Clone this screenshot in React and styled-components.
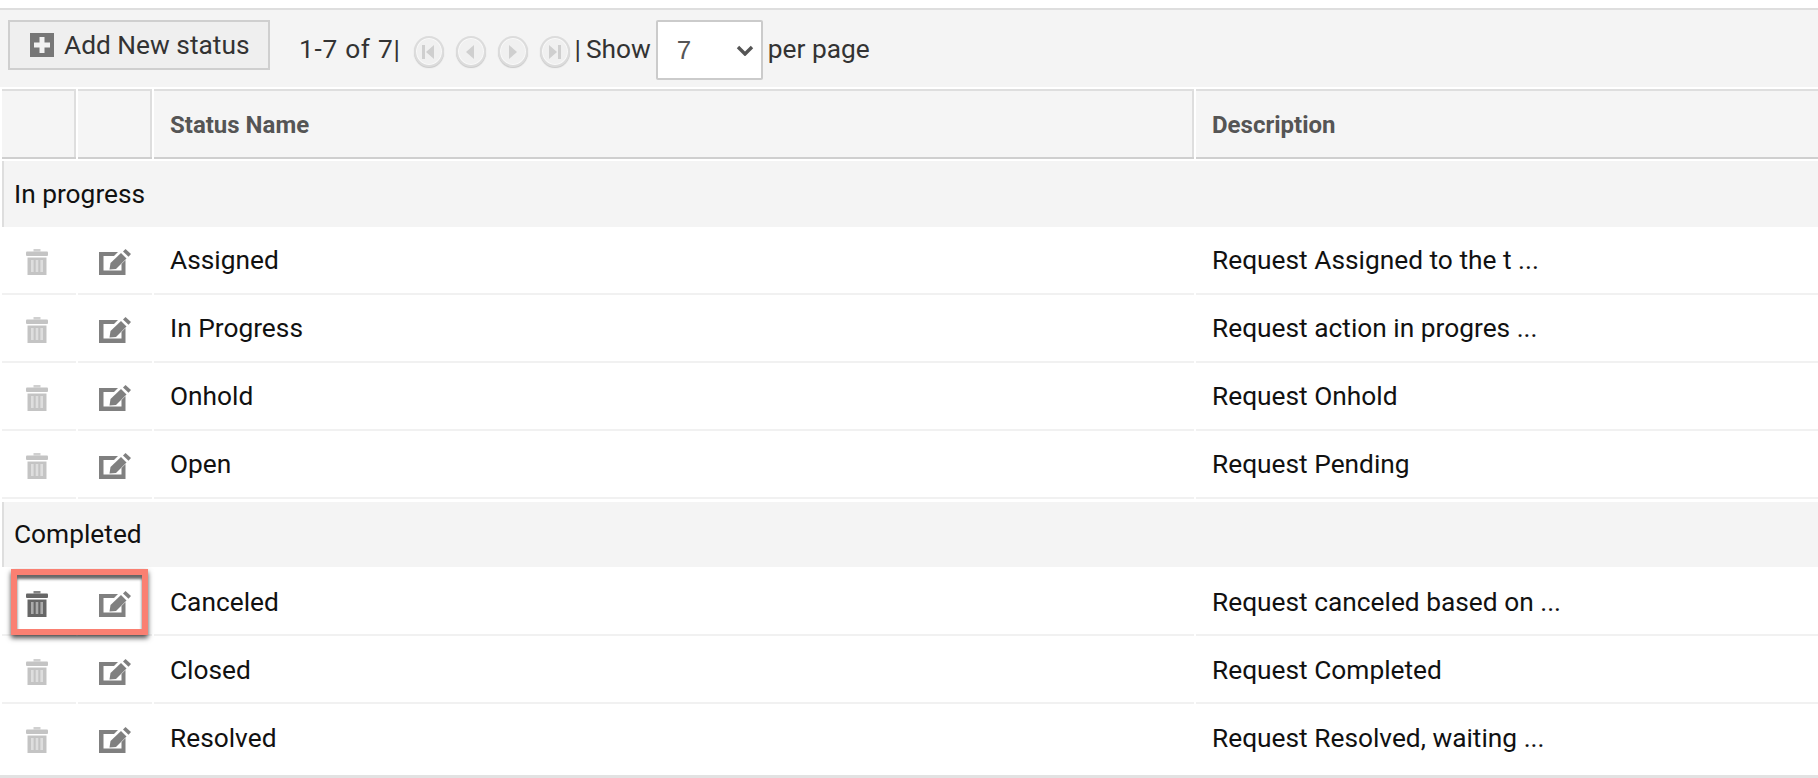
import React from "react";
import styled, { createGlobalStyle } from "styled-components";

const Global = createGlobalStyle`
  html, body { margin: 0; padding: 0; background: #fff; overflow: hidden; }
  body { font-family: Roboto, "Liberation Sans", sans-serif; }
`;

const Page = styled.div`
  width: 1818px;
  height: 778px;
  padding-top: 8px;
  box-sizing: border-box;
  overflow: hidden;
  position: relative;
`;

const Toolbar = styled.div`
  height: 77px;
  box-sizing: content-box;
  border-top: 2px solid #dedede;
  background: #f4f4f4;
  display: flex;
  align-items: flex-start;
  padding-left: 8px;
  color: #333;
  font-size: 26.3px;
`;

const AddButton = styled.button`
  width: 262px;
  height: 50px;
  margin-top: 10px;
  box-sizing: border-box;
  border: 2px solid #cfcfcf;
  background: #efefef;
  color: #333;
  font: 26.3px Roboto, sans-serif;
  display: flex;
  align-items: center;
  gap: 10px;
  padding: 0 0 0 20px;
`;

const PageInfo = styled.span`
  margin: 24px 0 0 29px;
  line-height: 30px;
  letter-spacing: 0.7px;
`;

const NavGroup = styled.div`
  display: flex;
  margin: 26px 0 0 13px;
  gap: 12px;
`;

const NavButton = styled.span`
  width: 30px;
  height: 31px;
  box-sizing: border-box;
  border-radius: 50%;
  border: 2px solid #dcdcdc;
  box-shadow: 0 1px 1px #c8c8c8, inset 0 0 0 1px #f8f8f8;
  background: #f0f0f0;
  display: flex;
  align-items: center;
  justify-content: center;
`;

const Divider = styled.span`
  margin: 24px 0 0 5px;
  line-height: 30px;
`;

const ShowLabel = styled.span`
  margin: 24px 0 0 5px;
  line-height: 30px;
`;

const SelectWrap = styled.div`
  position: relative;
  width: 107px;
  height: 60px;
  margin: 10px 0 0 5px;
`;

const PerPage = styled.select`
  appearance: none;
  width: 100%;
  height: 100%;
  box-sizing: border-box;
  border: 2px solid #cbcbcb;
  border-radius: 2px;
  background: #fff;
  color: #555;
  font: 26px "Liberation Sans", sans-serif;
  padding-left: 19px;
`;

const Chevron = styled.svg`
  position: absolute;
  right: 9px;
  top: 25px;
  pointer-events: none;
`;

const PerPageLabel = styled.span`
  margin: 24px 0 0 5px;
  line-height: 30px;
`;

const Row = styled.div`
  display: grid;
  grid-template-columns: 74px 74px 1040px 1fr;
  column-gap: 2px;
  padding-left: 2px;
`;

const HeaderRow = styled(Row)`
  margin-top: 2px;
  height: 70px;
`;

const HeaderCell = styled.div`
  box-sizing: border-box;
  background: #f5f5f5;
  border-top: 2px solid #dedede;
  border-bottom: 2px solid #cfcfcf;
  box-shadow: inset -2px 0 0 #dedede;
  padding: 2px 0 0 16px;
  display: flex;
  align-items: center;
  font-size: 24px;
  font-weight: 700;
  color: #555;
  &:last-child { box-shadow: none; }
`;

const GroupRow = styled.div`
  margin: ${(p) => p.$gap}px 0 ${(p) => p.$after}px 2px;
  height: ${(p) => p.$height}px;
  box-sizing: border-box;
  border-left: 2px solid #dedede;
  background: #f4f4f4;
  padding: 0 0 ${(p) => p.$after}px 10px;
  display: flex;
  align-items: center;
  font-size: 26.3px;
  color: #111;
`;

const BodyRow = styled(Row)`
  height: 68px;
`;

const BodyCell = styled.div`
  box-sizing: border-box;
  border-bottom: 2px solid ${(p) => (p.$last ? "transparent" : "#f1f1f1")};
  padding: ${(p) => p.$shift}px 0 0 16px;
  display: flex;
  align-items: center;
  font-size: 26.3px;
  color: #111;
`;

const IconCell = styled(BodyCell)`
  padding: ${(p) => p.$shift + 3}px 0 0 ${(p) => p.$left}px;
`;

const BottomRule = styled.div`
  margin-top: 3px;
  height: 3px;
  background: #e2e2e2;
`;

const Highlight = styled.div`
  position: absolute;
  left: 11px;
  top: 569px;
  width: 137px;
  height: 66px;
  box-sizing: border-box;
  border: 6px solid #fa8072;
  box-shadow: 0 3px 5px rgba(0, 0, 0, 0.7), inset 0 4px 3px rgba(0, 0, 0, 0.6);
`;

const TrashIcon = ({ color }) => (
  <svg width="22" height="26" viewBox="0 0 22 26" style={{ filter: "blur(0.5px)" }}>
    <rect x="7.5" y="0" width="7" height="2.5" fill={color} opacity="0.8" />
    <rect x="0" y="2.5" width="22" height="4.5" rx="1" fill={color} />
    <path d="M1.5 8.5h19V26h-19z" fill={color} />
    <path d="M5 11h2.6v12H5zM9.7 11h2.6v12H9.7zM14.4 11H17v12h-2.6z" fill="#fff" opacity="0.45" />
  </svg>
);

const EditIcon = () => (
  <svg width="32" height="26" viewBox="0 0 32 26" style={{ filter: "blur(0.4px)" }}>
    <path d="M0 3h19l-4 4H4.5v14.5h18V15l4-4v15H0z" fill="#808080" />
    <path d="M10.5 20.5l1-6.5L22 4l5.5 5.5L17 20z" fill="#808080" />
    <path d="M24 2.5 26.5 0 32 5l-2.5 2.8z" fill="#808080" />
  </svg>
);

const NavIcon = ({ kind }) => {
  const shapes = {
    first: "M2 2h3v14H2zM14 2v14L6 9z",
    prev: "M12 2v14L4 9z",
    next: "M5 2v14l8-7z",
    last: "M3 2v14l8-7zM12 2h3v14h-3z",
  };
  return (
    <svg width="18" height="18" viewBox="0 0 18 18" style={{ filter: "blur(0.4px)" }}>
      <path d={shapes[kind]} fill="#cfcfcf" />
    </svg>
  );
};

const groups = [
  {
    name: "In progress",
    gap: 2,
    height: 66,
    after: 0,
    shift: 0,
    rows: [
      ["Assigned", "Request Assigned to the t ..."],
      ["In Progress", "Request action in progres ..."],
      ["Onhold", "Request Onhold"],
      ["Open", "Request Pending"],
    ],
  },
  {
    name: "Completed",
    gap: 3,
    height: 65,
    after: 1,
    shift: 2,
    rows: [
      ["Canceled", "Request canceled based on ..."],
      ["Closed", "Request Completed"],
      ["Resolved", "Request Resolved, waiting ..."],
    ],
  },
];

export default function App() {
  return (
    <Page>
      <Global />
      <Toolbar>
        <AddButton>
          <svg width="24" height="24" viewBox="0 0 24 24">
            <rect width="24" height="24" fill="#777" />
            <path d="M9.5 4h5v5.5H20v5h-5.5V20h-5v-5.5H4v-5h5.5z" fill="#f2f2f2" />
          </svg>
          Add New status
        </AddButton>
        <PageInfo>1-7 of 7|</PageInfo>
        <NavGroup>
          {["first", "prev", "next", "last"].map((k) => (
            <NavButton key={k}>
              <NavIcon kind={k} />
            </NavButton>
          ))}
        </NavGroup>
        <Divider>|</Divider>
        <ShowLabel>Show</ShowLabel>
        <SelectWrap>
          <PerPage defaultValue="7">
            <option>7</option>
            <option>14</option>
          </PerPage>
          <Chevron width="18" height="11" viewBox="0 0 18 11">
            <path d="M2 2l7 7 7-7" fill="none" stroke="#555" strokeWidth="3.4" />
          </Chevron>
        </SelectWrap>
        <PerPageLabel>per page</PerPageLabel>
      </Toolbar>
      <HeaderRow>
        <HeaderCell />
        <HeaderCell />
        <HeaderCell>Status Name</HeaderCell>
        <HeaderCell>Description</HeaderCell>
      </HeaderRow>
      {groups.map((g) => (
        <React.Fragment key={g.name}>
          <GroupRow $gap={g.gap} $height={g.height} $after={g.after}>{g.name}</GroupRow>
          {g.rows.map(([name, desc]) => {
            const last = name === "Resolved";
            return (
              <BodyRow key={name}>
                <IconCell $left={24} $shift={g.shift} $last={last}>
                  <TrashIcon color={name === "Canceled" ? "#666" : "#c4c4c4"} />
                </IconCell>
                <IconCell $left={21} $shift={g.shift} $last={last}>
                  <EditIcon />
                </IconCell>
                <BodyCell $shift={g.shift} $last={last}>{name}</BodyCell>
                <BodyCell $shift={g.shift} $last={last}>{desc}</BodyCell>
              </BodyRow>
            );
          })}
        </React.Fragment>
      ))}
      <BottomRule />
      <Highlight />
    </Page>
  );
}
